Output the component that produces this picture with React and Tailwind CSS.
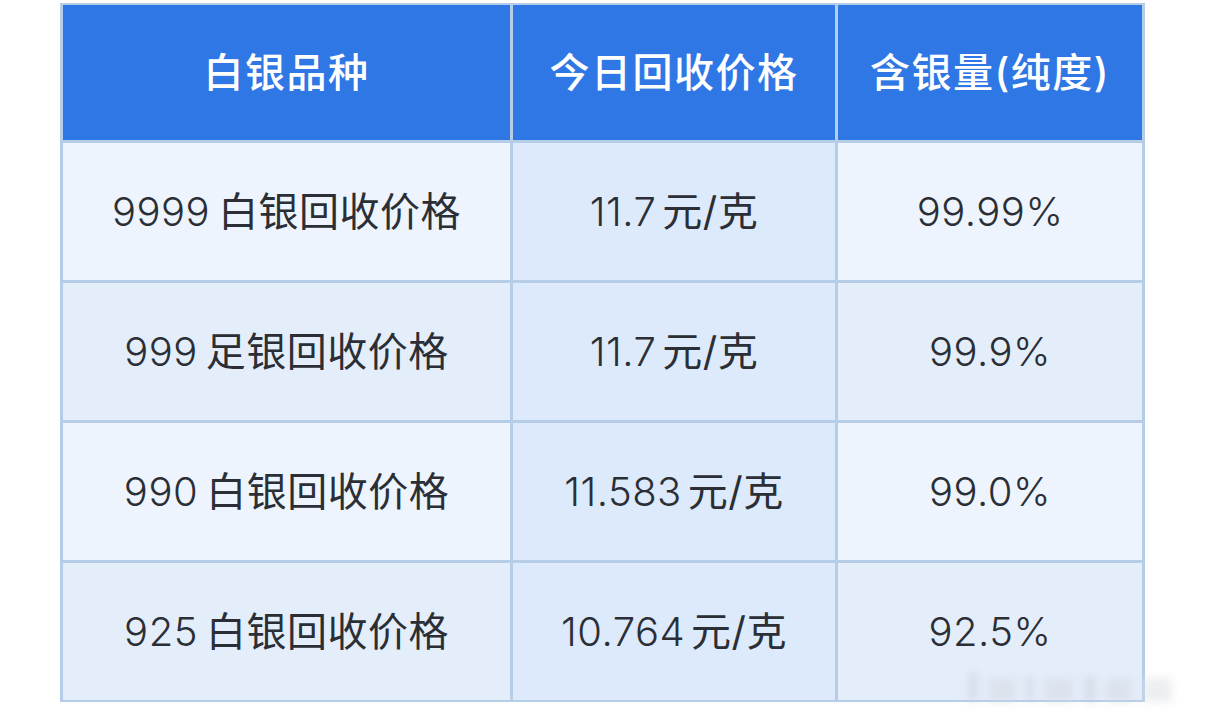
const rows = [
  { num: '9999', name: '白银回收价格', pNum: '11.7', price: '元/克', purity: '99.99%' },
  { num: '999', name: '足银回收价格', pNum: '11.7', price: '元/克', purity: '99.9%' },
  { num: '990', name: '白银回收价格', pNum: '11.583', price: '元/克', purity: '99.0%' },
  { num: '925', name: '白银回收价格', pNum: '10.764', price: '元/克', purity: '92.5%' },
]

const font = { fontFamily: 'Inter, "Noto Sans CJK SC", sans-serif' }

export default function App() {
  return (
    <div className="w-[1206px] h-[715px] bg-white relative overflow-hidden" style={font}>
      <div className="ml-[60px] mt-[3px] w-[1085px] bg-[#b6cde8] px-[3px] pt-[2px] pb-[2px] grid grid-cols-[447px_322px_304px] gap-[3px]">
        {['白银品种', '今日回收价格', '含银量(纯度)'].map((h) => (
          <div
            key={h}
            className="h-[135px] bg-[#2e77e5] flex items-center justify-center text-white text-[40px] font-medium tracking-[1.5px]"
          >
            {h}
          </div>
        ))}
        {rows.map((r, i) => {
          const side = i % 2 === 0 ? 'bg-[#edf4fd]' : 'bg-[#e4eefb]'
          const cell = 'h-[137px] flex items-center justify-center text-[40px] text-[#2b2f35] font-light tracking-[0.5px]'
          return [
            <div key={r.num + i} className={`${cell} ${side}`}>
              {r.num}
              <span className="ml-[8px] font-normal">{r.name}</span>
            </div>,
            <div key={r.num + i + 'p'} className={`${cell} bg-[#dceafb]`}>
              {r.pNum}
              <span className="ml-[6px] font-normal">{r.price}</span>
            </div>,
            <div key={r.num + i + 'c'} className={`${cell} ${side}`}>{r.purity}</div>,
          ]
        })}
      </div>
      <div className="absolute left-[960px] top-[668px] w-[236px] h-[34px] flex items-end gap-[10px] px-2 opacity-50 blur-[4px]">
        <div className="w-[10px] h-[30px] bg-[#c9ced6]" />
        <div className="w-[28px] h-[24px] bg-[#d3d8df]" />
        <div className="w-[8px] h-[26px] bg-[#c9ced6]" />
        <div className="w-[30px] h-[24px] bg-[#d3d8df]" />
        <div className="w-[12px] h-[26px] bg-[#c9ced6]" />
        <div className="w-[26px] h-[24px] bg-[#d3d8df]" />
        <div className="w-[30px] h-[24px] bg-[#dcdfe4]" />
      </div>
    </div>
  )
}
